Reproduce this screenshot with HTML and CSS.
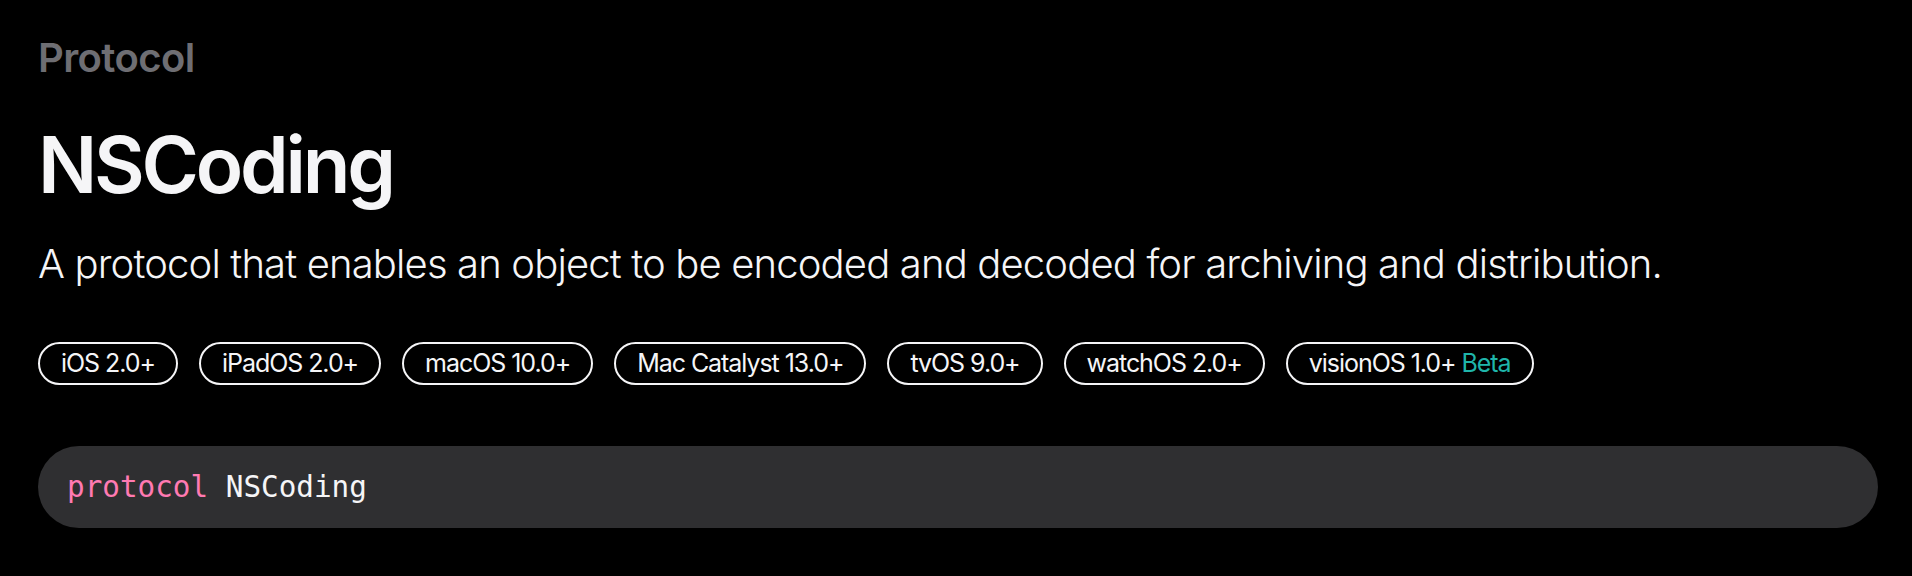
FILE: index.html
```html
<!DOCTYPE html>
<html lang="en">
<head>
  <meta charset="UTF-8">
  <title>NSCoding | Apple Developer Documentation</title>
  <link rel="stylesheet" href="styles.css">
</head>
<body>
  <main class="topic">
    <div class="eyebrow">Protocol</div>
    <h1 class="title">NSCoding</h1>
    <p class="abstract">A protocol that enables an object to be encoded and decoded for archiving and distribution.</p>
    <ul class="availability">
      <li class="badge">iOS 2.0+</li>
      <li class="badge">iPadOS 2.0+</li>
      <li class="badge">macOS 10.0+</li>
      <li class="badge">Mac Catalyst 13.0+</li>
      <li class="badge">tvOS 9.0+</li>
      <li class="badge">watchOS 2.0+</li>
      <li class="badge">visionOS 1.0+ <span class="beta">Beta</span></li>
    </ul>
    <div class="declaration">
      <code><span class="keyword">protocol</span> NSCoding</code>
    </div>
  </main>
</body>
</html>
```

FILE: styles.css
```css
body {
  background: #000;
  color: #f5f5f7;
  font-family: 'Inter', 'Noto Sans', sans-serif;
  margin: 0;
  padding: 0;
}
.topic {
  padding: 34px 34px 40px 38px;
  display: flex;
  flex-direction: column;
}
.eyebrow {
  color: #6e6e73;
  font-size: 40px;
  line-height: 48px;
  font-weight: 600;
  letter-spacing: -0.6px;
}
.title {
  margin: 36px 0 0 0;
  font-size: 78px;
  line-height: 94px;
  font-weight: 600;
  letter-spacing: -3.2px;
}
.abstract {
  margin: 28px 0 0 0;
  font-size: 40px;
  line-height: 48px;
  font-weight: 300;
  letter-spacing: -0.85px;
}
.availability {
  list-style: none;
  margin: 54px 0 0 0;
  padding: 0;
  display: flex;
  gap: 21px;
}
.badge {
  border: 2px solid #f5f5f7;
  border-radius: 22px;
  padding: 5px 21px;
  font-size: 25px;
  line-height: 29px;
  font-weight: 400;
  letter-spacing: -1.05px;
  white-space: nowrap;
}
.beta {
  color: #1fb5aa;
}
.declaration {
  margin-top: 61px;
  background: #2f2f31;
  border-radius: 41px;
  height: 82px;
  padding: 0 29px;
  display: flex;
  align-items: center;
}
.declaration code {
  font-family: 'DejaVu Sans Mono', 'Liberation Mono', monospace;
  font-size: 29.3px;
  color: #f5f5f7;
}
.keyword {
  color: #ff7ab2;
}
```
